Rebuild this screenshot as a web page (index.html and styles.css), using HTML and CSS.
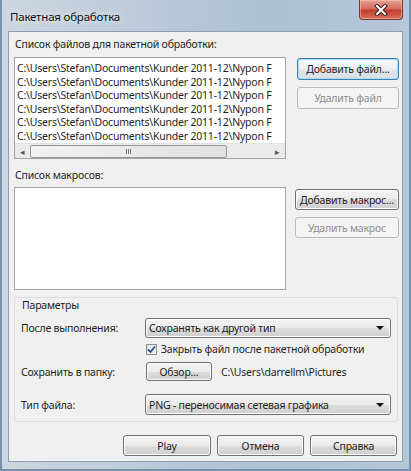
FILE: index.html
```html
<!DOCTYPE html>
<html lang="ru">
<head>
    <meta charset="UTF-8">
    <title>Пакетная обработка</title>
    <link rel="stylesheet" href="styles.css">
</head>
<body>
    <div class="window">
        <div class="titlebar">
            <span class="title">Пакетная обработка</span>
            <div class="close">
                <svg width="14" height="12" viewBox="0 0 14 12">
                    <path d="M3 2 L11 10 M11 2 L3 10" stroke="#3a2020" stroke-width="4" stroke-linecap="square"/>
                    <path d="M3 2 L11 10 M11 2 L3 10" stroke="#ffffff" stroke-width="2" stroke-linecap="square"/>
                </svg>
            </div>
        </div>

        <div class="client">
            <div class="label">Список файлов для пакетной обработки:</div>
            <div class="list-row">
                <div class="listbox files">
                    <div class="lines">
                        <div>C:\Users\Stefan\Documents\Kunder 2011-12\Nypon F</div>
                        <div>C:\Users\Stefan\Documents\Kunder 2011-12\Nypon F</div>
                        <div>C:\Users\Stefan\Documents\Kunder 2011-12\Nypon F</div>
                        <div>C:\Users\Stefan\Documents\Kunder 2011-12\Nypon F</div>
                        <div>C:\Users\Stefan\Documents\Kunder 2011-12\Nypon F</div>
                        <div>C:\Users\Stefan\Documents\Kunder 2011-12\Nypon F</div>
                    </div>
                    <div class="hscroll">
                        <span class="arrow">&#9666;</span>
                        <div class="thumb"><span class="grip"></span></div>
                        <span class="arrow right">&#9656;</span>
                    </div>
                </div>
                <div class="side">
                    <button class="btn focus">Добавить файл...</button>
                    <button class="btn" disabled>Удалить файл</button>
                </div>
            </div>

            <div class="label second">Список макросов:</div>
            <div class="list-row">
                <div class="listbox macros"></div>
                <div class="side wide">
                    <button class="btn">Добавить макрос...</button>
                    <button class="btn" disabled>Удалить макрос</button>
                </div>
            </div>

            <div class="group">
                <div class="group-title">Параметры</div>
                <div class="field after">
                    <span class="field-label">После выполнения:</span>
                    <div class="combo">
                        <span>Сохранять как другой тип</span>
                        <span class="caret"></span>
                    </div>
                </div>
                <div class="field check-row">
                    <span></span>
                    <label class="check">
                        <span class="box">
                            <svg width="9" height="9" viewBox="0 0 9 9">
                                <path d="M1 4.5 L3.5 7 L8 1.5" fill="none" stroke="#2f4d8a" stroke-width="1.8"/>
                            </svg>
                        </span>
                        Закрыть файл после пакетной обработки
                    </label>
                </div>
                <div class="field browse">
                    <span class="field-label">Сохранить в папку:</span>
                    <div class="browse-line">
                        <button class="btn">Обзор...</button>
                        <span class="path">C:\Users\darrellm\Pictures</span>
                    </div>
                </div>
                <div class="field type">
                    <span class="field-label">Тип файла:</span>
                    <div class="combo">
                        <span>PNG - переносимая сетевая графика</span>
                        <span class="caret"></span>
                    </div>
                </div>
            </div>

            <div class="footer">
                <button class="btn">Play</button>
                <button class="btn">Отмена</button>
                <button class="btn">Справка</button>
            </div>
        </div>
    </div>
</body>
</html>
```

FILE: styles.css
```css
* {
    box-sizing: border-box;
}
body {
    margin: 0;
    font-family: "Noto Sans", "Open Sans", sans-serif;
    font-size: 10.5px;
    letter-spacing: -0.2px;
    color: #1e1e1e;
}
.window {
    width: 411px;
    height: 471px;
    display: flex;
    flex-direction: column;
    padding: 0 8px 9px 8px;
    background: linear-gradient(90deg, #cdd6e0 0%, #bccada 35%, #adc0d5 65%, #b6c7d9 100%);
    box-shadow: inset 2px 0 #7891ae, inset -2px 0 #7891ae, inset 0 -2px #7891ae;
}
.titlebar {
    height: 31px;
    display: flex;
    align-items: flex-start;
}
.title {
    margin: 10px 0 0 2px;
    font-size: 11.5px;
    line-height: 14px;
    color: #111;
    text-shadow: 0 0 6px rgba(255, 255, 255, 0.9);
}
.close {
    margin-left: auto;
    width: 44px;
    height: 20px;
    display: flex;
    align-items: center;
    justify-content: center;
    border: 1px solid #7a3a34;
    border-top: none;
    border-radius: 0 0 4px 4px;
    background: linear-gradient(#e6a597 0%, #d66b5c 45%, #c13d2e 55%, #d5705c 100%);
    box-shadow: inset 0 0 0 1px rgba(255, 200, 190, 0.5);
}
.client {
    flex: 1;
    background: #f0f0f0;
    border: 1px solid #8e9fb3;
    padding: 5px 3px 5px 5px;
}
.label {
    height: 15px;
    line-height: 15px;
    padding-left: 1px;
}
.label.second {
    margin-top: 9px;
}
.list-row {
    display: flex;
    align-items: flex-start;
    margin-top: 5px;
}
.label.second + .list-row {
    margin-top: 4px;
}
.listbox {
    width: 272px;
    background: #fff;
    border: 1px solid #a3a3a3;
    overflow: hidden;
}
.files {
    height: 102px;
    display: flex;
    flex-direction: column;
}
.macros {
    height: 103px;
}
.lines {
    flex: 1;
    padding: 4px 0 0 2px;
    white-space: nowrap;
    overflow: hidden;
}
.lines div {
    height: 13.5px;
    line-height: 13.5px;
}
.hscroll {
    height: 15px;
    flex-shrink: 0;
    display: flex;
    align-items: center;
    background: #eaeaea;
    border-top: 1px solid #e2e2e2;
    color: #555;
    font-size: 9px;
}
.arrow {
    width: 15px;
    text-align: center;
}
.arrow.right {
    margin-left: auto;
}
.thumb {
    width: 197px;
    height: 13px;
    border: 1px solid #979797;
    border-radius: 2px;
    background: linear-gradient(90deg, #f2f2f2, #e0e0e0);
    display: flex;
    align-items: center;
    justify-content: center;
}
.grip {
    width: 5px;
    height: 5px;
    border-left: 1px solid #777;
    border-right: 1px solid #777;
    position: relative;
}
.grip::after {
    content: "";
    position: absolute;
    left: 1px;
    top: 0;
    width: 1px;
    height: 5px;
    background: #777;
}
.side {
    width: 102px;
    margin-left: 11px;
    margin-top: 1px;
    display: flex;
    flex-direction: column;
    gap: 7px;
}
.side.wide {
    width: 104px;
    margin-left: 9px;
    margin-top: 2px;
}
.btn {
    font: inherit;
    letter-spacing: inherit;
    color: #1e1e1e;
    height: 22px;
    padding: 0;
    white-space: nowrap;
    border: 1px solid #707070;
    border-radius: 3px;
    background: linear-gradient(#f3f3f3 0%, #ebebeb 50%, #dddddd 50%, #cfcfcf 100%);
    box-shadow: inset 0 0 0 1px #fcfcfc;
}
.btn.focus {
    border-color: #3c7fb1;
    box-shadow: inset 0 0 0 1px #a6dcf6;
    background: linear-gradient(#f6f9fb 0%, #edf1f4 50%, #e2e7eb 50%, #d9dfe4 100%);
}
.btn:disabled {
    color: #8d8d8d;
    border-color: #b8bcbf;
    background: #f4f4f4;
    box-shadow: none;
}
.side.wide .btn {
    height: 21px;
}
.group {
    margin-top: 7px;
    height: 125px;
    width: 384px;
    border: 1px solid #d7dde3;
    border-radius: 3px;
    padding: 0 6px 6px 6px;
}
.group-title {
    height: 15px;
    line-height: 15px;
    padding-left: 1px;
}
.field {
    display: grid;
    grid-template-columns: 124px 1fr;
    align-items: center;
}
.after {
    margin-top: 5px;
    height: 20px;
}
.check-row {
    margin-top: 4px;
    height: 13px;
}
.browse {
    margin-top: 7px;
    height: 19px;
}
.type {
    margin-top: 13px;
    height: 21px;
}
.combo {
    height: 100%;
    display: flex;
    align-items: center;
    padding: 0 6px 0 3px;
    border: 1px solid #707070;
    border-radius: 3px;
    background: linear-gradient(#f3f3f3 0%, #ebebeb 50%, #dddddd 50%, #cfcfcf 100%);
    box-shadow: inset 0 0 0 1px #fcfcfc;
}
.caret {
    margin-left: auto;
    width: 0;
    height: 0;
    border-left: 4px solid transparent;
    border-right: 4px solid transparent;
    border-top: 4px solid #111;
}
.check {
    display: flex;
    align-items: center;
    gap: 4px;
    margin-left: 1px;
}
.box {
    width: 11px;
    height: 11px;
    border: 1px solid #8e8f8f;
    background: linear-gradient(135deg, #dbe4ee, #f7f9fb);
    display: flex;
    align-items: center;
    justify-content: center;
}
.browse-line {
    display: flex;
    align-items: center;
    height: 100%;
    gap: 9px;
}
.browse-line .btn {
    width: 66px;
    height: 19px;
    margin-left: 1px;
}
.footer {
    margin-top: 13px;
    display: flex;
    justify-content: flex-end;
    gap: 6px;
    padding-right: 2px;
}
.footer .btn {
    width: 87px;
    height: 21px;
}
.footer .btn:first-child {
    width: 88px;
}
```
